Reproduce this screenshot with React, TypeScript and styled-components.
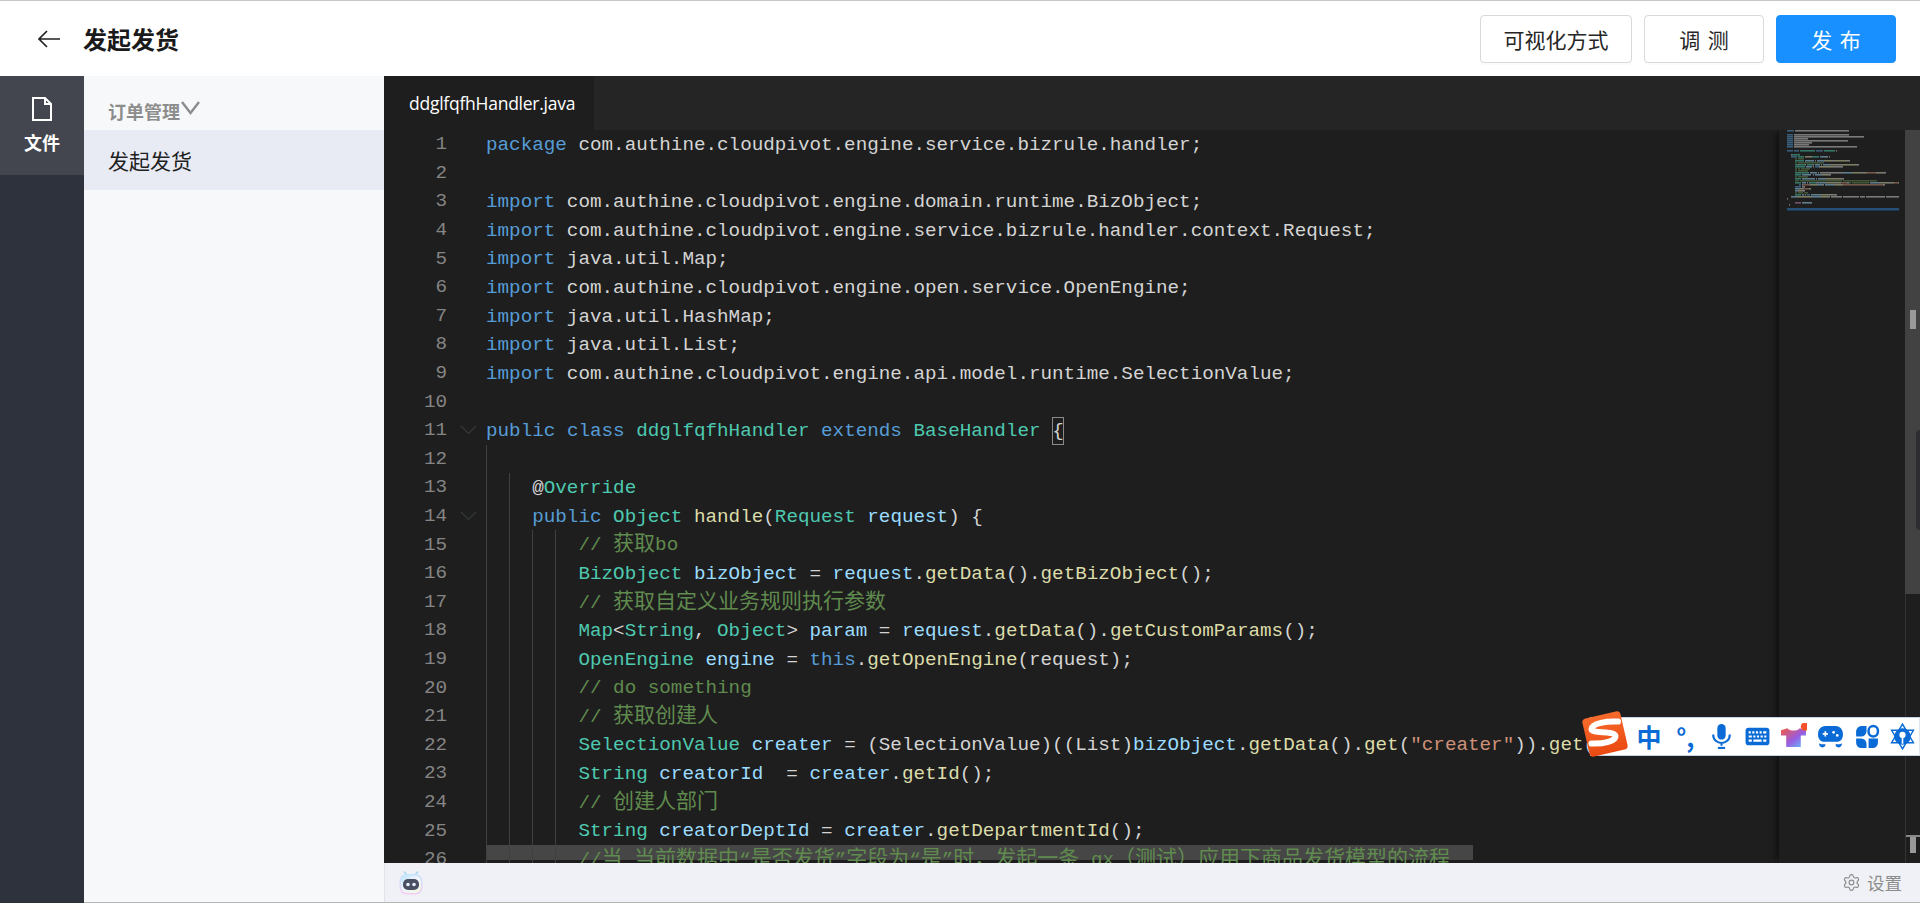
import React from 'react';
import styled, { createGlobalStyle } from 'styled-components';
import { Settings } from 'lucide-react';

const GlobalStyle = createGlobalStyle`
  html, body {
    margin: 0;
    padding: 0;
    height: 100%;
    overflow: hidden;
    background: #fff;
    font-family: "Noto Sans CJK SC", "Liberation Sans", sans-serif;
  }
  * { box-sizing: border-box; }
`;

const Page = styled.div`
  position: relative;
  display: flex;
  flex-direction: column;
  height: 903px;
  width: 1920px;
  border-top: 1px solid #c6c6c6;
  overflow: hidden;
`;

const Header = styled.header`
  flex: 0 0 75px;
  display: flex;
  align-items: center;
  padding: 0 24px 0 37px;
  background: #fff;
`;

const BackIcon = styled.svg`
  width: 23px;
  height: 20px;
  margin-right: 23px;
  flex: none;
`;

const Title = styled.h1`
  margin: 0;
  font-size: 24px;
  font-weight: 700;
  color: #1a1a1a;
  flex: 1;
`;

const Actions = styled.div`
  display: flex;
  gap: 12px;
`;

const ActionButton = styled.button<{ $primary?: boolean; $width: number }>`
  width: ${(p) => p.$width}px;
  height: 48px;
  border-radius: 4px;
  border: 1px solid ${(p) => (p.$primary ? '#1890ff' : '#d9d9d9')};
  background: ${(p) => (p.$primary ? '#1890ff' : '#fff')};
  color: ${(p) => (p.$primary ? '#fff' : '#262626')};
  font-family: inherit;
  font-size: 21px;
  word-spacing: 3px;
  box-shadow: 0 2px 0 rgba(0, 0, 0, 0.015);
  padding: 0;
`;

const Main = styled.div`
  flex: 1;
  min-height: 0;
  display: flex;
`;

const Rail = styled.nav`
  flex: 0 0 84px;
  background: #2d323c;
`;

const RailItem = styled.div`
  height: 99px;
  background: #43464f;
  display: flex;
  flex-direction: column;
  align-items: center;
  padding-top: 21px;
  color: #fff;
  font-size: 18px;
  font-weight: 700;
  line-height: 26px;
`;

const FileIcon = styled.svg`
  width: 20px;
  height: 24px;
  margin-bottom: 8px;
`;

const Sidebar = styled.aside`
  flex: 0 0 300px;
  background: #f7f8fa;
  border-bottom: 1px solid #b5b5b5;
`;

const GroupTitle = styled.div`
  height: 54px;
  display: flex;
  align-items: center;
  padding: 16px 0 0 24px;
  font-size: 18px;
  font-weight: 700;
  color: #8c8c8c;
`;

const GroupChevron = styled.svg`
  width: 19px;
  height: 14px;
  margin: -7px 0 0 1px;
`;

const TreeItem = styled.div`
  height: 60px;
  display: flex;
  align-items: center;
  padding-left: 24px;
  background: #e8ebf3;
  font-size: 21px;
  color: #1f1f1f;
`;

const Workspace = styled.section`
  flex: 1;
  min-width: 0;
  display: flex;
  flex-direction: column;
  border-bottom: 1px solid #b5b5b5;
`;

const TabBar = styled.div`
  flex: 0 0 54px;
  display: flex;
  background: #252526;
`;

const Tab = styled.div`
  width: 210px;
  display: flex;
  align-items: center;
  padding-left: 25px;
  background: #1e1e1e;
  color: #fff;
  font-family: "Open Sans", sans-serif;
  font-size: 17.5px;
  letter-spacing: -0.25px;
`;

const Editor = styled.div`
  flex: 1;
  min-height: 0;
  display: flex;
  background: #1e1e1e;
  overflow: hidden;
`;

const CodePane = styled.div`
  flex: 1;
  min-width: 0;
  overflow: hidden;
`;

const CodeRow = styled.div`
  display: flex;
  height: 28.6px;
  line-height: 30px;
  font-family: "Liberation Mono", "Noto Sans CJK SC", monospace;
  font-size: 19.25px;
`;

const Gutter = styled.div`
  flex: 0 0 102px;
  display: flex;
  align-items: center;
  justify-content: flex-end;
  color: #858585;
  padding-right: 9px;
`;

const LineNo = styled.span`
  width: 54px;
  text-align: right;
  margin-right: 13px;
`;

const FoldSlot = styled.span`
  width: 17px;
  height: 10px;
  display: flex;
`;

const CodeText = styled.div`
  position: relative;
  flex: 1;
  white-space: pre;
  color: #d4d4d4;
`;

const Guide = styled.i<{ $level: number }>`
  position: absolute;
  top: 0;
  bottom: 0;
  left: ${(p) => p.$level * 23.1}px;
  width: 1px;
  background: #404040;
`;

const Selection = styled.i`
  position: absolute;
  top: 0;
  left: 0;
  width: 987px;
  height: 15px;
  background: #464646;
`;

const TOKEN_COLORS: Record<string, string> = {
  t: '#d4d4d4',
  k: '#569cd6',
  c: '#4ec9b0',
  v: '#9cdcfe',
  f: '#dcdcaa',
  m: '#608b4e',
  s: '#ce9178',
  p: '#c586c0',
};

const Token = styled.span<{ $kind: string }>`
  position: relative;
  color: ${(p) => TOKEN_COLORS[p.$kind]};
`;

const Cjk = styled.span`
  font-family: "Noto Sans CJK SC", sans-serif;
  font-size: 21px;
  line-height: 0;
`;

const Bracket = styled.span`
  position: relative;
  display: inline-block;
  height: 28px;
  line-height: 28px;
  box-shadow: inset 0 0 0 1px #8a8a8a;
`;

const Minimap = styled.div`
  flex: 0 0 126px;
  padding-left: 8px;
  background: #1e1e1e;
  box-shadow: -5px 0 6px -3px #0d0d0d;
  position: relative;
`;

const MinimapSvg = styled.svg`
  display: block;
  width: 118px;
  height: 120px;
  filter: blur(0.35px);
`;

const Overview = styled.div`
  flex: 0 0 15px;
  position: relative;
  border-left: 1px solid #333;
`;

const Slider = styled.div`
  position: absolute;
  top: 0;
  left: -1px;
  right: 0;
  height: 464px;
  background: #424242;
`;

const SliderMark = styled.div`
  position: absolute;
  top: 180px;
  left: 5px;
  width: 6px;
  height: 19px;
  background: #999;
`;

const SliderHandle = styled.div`
  position: absolute;
  top: 300px;
  right: 0;
  width: 4px;
  height: 100px;
  border-radius: 4px 0 0 4px;
  background: #2c2c31;
`;

const RulerTee = styled.div`
  position: absolute;
  top: 705px;
  left: 0;
  right: 0;
  height: 2px;
  background: #888;
  &::after {
    content: '';
    position: absolute;
    top: 2px;
    left: 4px;
    width: 6px;
    height: 16px;
    background: #999;
  }
`;

const StatusBar = styled.footer`
  flex: 0 0 39px;
  display: flex;
  align-items: center;
  justify-content: space-between;
  padding: 0 18px 0 14px;
  background: #f0f1f6;
  border-left: 1px solid #e3e4e9;
`;

const RobotIcon = styled.svg`
  width: 24px;
  height: 24px;
`;

const SettingsLink = styled.div`
  display: flex;
  align-items: center;
  gap: 6px;
  font-size: 17.5px;
  color: #8c8c8c;
`;

const ImeBar = styled.div`
  position: absolute;
  top: 716px;
  right: 0;
  width: 330px;
  height: 39px;
  padding-left: 40px;
  display: flex;
  align-items: center;
  background: #fff;
  border: 1px solid #c5d3e6;
  border-right-color: #dfe6f0;
`;

const ImeLogo = styled.svg`
  position: absolute;
  left: -12px;
  top: -10px;
  width: 52px;
  height: 52px;
`;

const ImeCell = styled.span`
  flex: 0 0 36.2px;
  display: flex;
  align-items: center;
  justify-content: center;
  color: #0a6bd6;
  font-weight: 700;
  font-size: 25px;
  line-height: 1;
`;

const ImeIcon = styled.svg`
  width: 27px;
  height: 27px;
`;

// [x:text] marks a token, everything else is plain text
const CODE: { n: number; level: number; src: string; fold?: boolean; selected?: boolean }[] = [
  { n: 1, level: 0, src: '[k:package] com.authine.cloudpivot.engine.service.bizrule.handler;' },
  { n: 2, level: 0, src: '' },
  { n: 3, level: 0, src: '[k:import] com.authine.cloudpivot.engine.domain.runtime.BizObject;' },
  { n: 4, level: 0, src: '[k:import] com.authine.cloudpivot.engine.service.bizrule.handler.context.Request;' },
  { n: 5, level: 0, src: '[k:import] java.util.Map;' },
  { n: 6, level: 0, src: '[k:import] com.authine.cloudpivot.engine.open.service.OpenEngine;' },
  { n: 7, level: 0, src: '[k:import] java.util.HashMap;' },
  { n: 8, level: 0, src: '[k:import] java.util.List;' },
  { n: 9, level: 0, src: '[k:import] com.authine.cloudpivot.engine.api.model.runtime.SelectionValue;' },
  { n: 10, level: 0, src: '' },
  { n: 11, level: 0, fold: true, src: '[k:public] [k:class] [c:ddglfqfhHandler] [k:extends] [c:BaseHandler] [b:{]' },
  { n: 12, level: 1, src: '' },
  { n: 13, level: 2, src: '    @[c:Override]' },
  { n: 14, level: 2, fold: true, src: '    [k:public] [c:Object] [f:handle]([c:Request] [v:request]) {' },
  { n: 15, level: 4, src: '        [m:// 获取bo]' },
  { n: 16, level: 4, src: '        [c:BizObject] [v:bizObject] = [v:request].[f:getData]().[f:getBizObject]();' },
  { n: 17, level: 4, src: '        [m:// 获取自定义业务规则执行参数]' },
  { n: 18, level: 4, src: '        [c:Map]<[c:String], [c:Object]> [v:param] = [v:request].[f:getData]().[f:getCustomParams]();' },
  { n: 19, level: 4, src: '        [c:OpenEngine] [v:engine] = [k:this].[f:getOpenEngine](request);' },
  { n: 20, level: 4, src: '        [m:// do something]' },
  { n: 21, level: 4, src: '        [m:// 获取创建人]' },
  { n: 22, level: 4, src: '        [c:SelectionValue] [v:creater] = (SelectionValue)((List)[v:bizObject].[f:getData]().[f:get]([s:"creater"])).[f:get](0);' },
  { n: 23, level: 4, src: '        [c:String] [v:creatorId]  = [v:creater].[f:getId]();' },
  { n: 24, level: 4, src: '        [m:// 创建人部门]' },
  { n: 25, level: 4, src: '        [c:String] [v:creatorDeptId] = [v:creater].[f:getDepartmentId]();' },
  { n: 26, level: 4, selected: true, src: '        [m://当 当前数据中“是否发货”字段为“是”时，发起一条 gx（测试）应用下商品发货模型的流程]' },
];

// rest of the file, only visible as tiny rows in the minimap
const MINIMAP_TAIL = [
  '        [c:String] [v:sfhf] = ([c:String])[v:bizObject].[f:getData]().[f:get]([s:"sfhf"]);[m:// xxxxxxxxxxxxxxxxx] [v:bizObject].[f:getData]().[f:get]([s:"xx"]);',
  '            [k:if] ([s:"xxxxx"].[f:equals]([v:sfhf])) [v:bizObject].[f:setData]([s:"xxxxxxxxxxxxxxxxxxxxxxxxxxxxxxxxxxxxxx"]);',
  '        [k:return] ();',
  '        [v:data].[f:put]([s:"xxx"]);',
  '        [v:map].[f:put]();',
  '        [m:// start flow]',
  '        [c:String] [v:id] = [k:new] [v:bizObject].[f:getData]().[f:get]();',
  '    [v:engine].[f:startWorkflow]([v:bizObject].[f:getId](), xxxxxxxxxx, xxxxxxxxxxxxxxx, true, xxxxxxxxxxxxxxxxxx, xxxxxxxxxxx);',
  '}',
  '',
  '        [p:return] [v:bizObject];',
  '  }',
];

type Tok = { kind: string; text: string };

function parseTokens(src: string): Tok[] {
  const parts = src.split(/\[(\w):([^\]]*)\]/);
  const out: Tok[] = [];
  for (let i = 0; i < parts.length; i += 3) {
    if (parts[i]) out.push({ kind: 't', text: parts[i] });
    if (parts[i + 1]) out.push({ kind: parts[i + 1], text: parts[i + 2] });
  }
  return out;
}

function renderText(text: string) {
  return text
    .split(/([\u4e00-\u9fff\uff00-\uffef]+)/)
    .map((part, i) => (i % 2 ? <Cjk key={i}>{part}</Cjk> : part));
}

function CodeLine({ n, level, src, fold, selected }: (typeof CODE)[number]) {
  return (
    <CodeRow>
      <Gutter>
        <LineNo>{n}</LineNo>
        <FoldSlot>
          {fold && (
            <svg width="17" height="10" viewBox="0 0 17 10" fill="none" stroke="#343a35" strokeWidth="1.2">
              <path d="M1 1l7.5 7.5L16 1" />
            </svg>
          )}
        </FoldSlot>
      </Gutter>
      <CodeText>
        {selected && <Selection />}
        {Array.from({ length: level }, (_, i) => (
          <Guide key={i} $level={i} />
        ))}
        {parseTokens(src).map((tok, i) =>
          tok.kind === 'b' ? (
            <Bracket key={i}>{tok.text}</Bracket>
          ) : (
            <Token key={i} $kind={tok.kind}>
              {renderText(tok.text)}
            </Token>
          ),
        )}
      </CodeText>
    </CodeRow>
  );
}

function MinimapRows() {
  const rows = [...CODE.map((l) => l.src), ...MINIMAP_TAIL];
  const rects: React.ReactNode[] = [];
  rows.forEach((src, row) => {
    let x = 0;
    parseTokens(src).forEach((tok) => {
      const kind = tok.kind === 'b' ? 't' : tok.kind;
      for (const word of tok.text.split(/(\s+)/)) {
        const w = [...word].reduce((s, c) => s + (c.charCodeAt(0) > 0x2fff ? 2 : 1), 0);
        if (word.trim() && x < 112) {
          rects.push(
            <rect
              key={`${row}-${x}`}
              x={x}
              y={row * 2}
              width={Math.min(w, 112 - x)}
              height={1.6}
              fill={TOKEN_COLORS[kind]}
              opacity={0.5}
            />,
          );
        }
        x += w;
      }
    });
  });
  return (
    <MinimapSvg viewBox="0 0 118 120">
      {rects}
      <rect x="0" y="78" width="112" height="2.5" fill="#264f78" />
    </MinimapSvg>
  );
}

export default function App() {
  return (
    <>
      <GlobalStyle />
      <Page>
        <Header>
          <BackIcon viewBox="0 0 23 20" fill="none" stroke="#222" strokeWidth="1.7">
            <path d="M23 10H2M10 2l-8 8 8 8" />
          </BackIcon>
          <Title>发起发货</Title>
          <Actions>
            <ActionButton $width={152}>可视化方式</ActionButton>
            <ActionButton $width={120}>调 测</ActionButton>
            <ActionButton $width={120} $primary>
              发 布
            </ActionButton>
          </Actions>
        </Header>
        <Main>
          <Rail>
            <RailItem>
              <FileIcon viewBox="0 0 20 24" fill="none" stroke="#fff" strokeWidth="2">
                <path d="M1 1h12l6 6v16H1zM13 1v6h6" />
              </FileIcon>
              文件
            </RailItem>
          </Rail>
          <Sidebar>
            <GroupTitle>
              订单管理
              <GroupChevron viewBox="0 0 19 14" fill="none" stroke="#8c8c8c" strokeWidth="2.4">
                <path d="M1 1l8.500 11L18 1" />
              </GroupChevron>
            </GroupTitle>
            <TreeItem>发起发货</TreeItem>
          </Sidebar>
          <Workspace>
            <TabBar>
              <Tab>ddglfqfhHandler.java</Tab>
            </TabBar>
            <Editor>
              <CodePane>
                {CODE.map((line) => (
                  <CodeLine key={line.n} {...line} />
                ))}
              </CodePane>
              <Minimap>
                <MinimapRows />
              </Minimap>
              <Overview>
                <Slider>
                  <SliderMark />
                  <SliderHandle />
                </Slider>
                <RulerTee />
              </Overview>
            </Editor>
            <StatusBar>
              <RobotIcon viewBox="0 0 24 24">
                <defs>
                  <linearGradient id="robotGlow" x1="0" y1="0" x2="1" y2="1">
                    <stop offset="0" stopColor="#bfe6fa" />
                    <stop offset="0.5" stopColor="#f2f4fc" />
                    <stop offset="1" stopColor="#eef9df" />
                  </linearGradient>
                  <linearGradient id="robotEdge" x1="0" y1="0" x2="0" y2="1">
                    <stop offset="0" stopColor="#c4e6fa" />
                    <stop offset="1" stopColor="#f6cdf3" />
                  </linearGradient>
                </defs>
                <path d="M5 0.500l3 3.500M19 0.500l-3 3.500" stroke="#a5d8f5" strokeWidth="1.500" fill="none" />
                <rect x="0.500" y="3" width="23" height="20.500" rx="7" fill="url(#robotEdge)" />
                <rect x="2" y="4.500" width="20" height="17.500" rx="6" fill="url(#robotGlow)" />
                <rect x="4" y="8" width="16" height="11" rx="5" fill="#4b4e60" />
                <circle cx="9" cy="13.500" r="1.800" fill="#e8f1ff" />
                <circle cx="15" cy="13.500" r="1.800" fill="#e8f1ff" />
              </RobotIcon>
              <SettingsLink>
                <Settings size={19} strokeWidth={1.5} />
                设置
              </SettingsLink>
            </StatusBar>
          </Workspace>
        </Main>
        <ImeBar>
          <ImeLogo viewBox="0 0 52 52">
            <defs>
              <linearGradient id="imeOrange" x1="0" y1="0" x2="0" y2="1">
                <stop offset="0" stopColor="#f76a2c" />
                <stop offset="1" stopColor="#ea4a12" />
              </linearGradient>
            </defs>
            <rect x="6.500" y="6.500" width="39" height="39" rx="4" fill="url(#imeOrange)" transform="rotate(-13 26 26)" />
            <path
              d="M39 13.500C28 13 13 15 12.500 21c-.4 5 23 1.500 24 7 .8 5-12 8-24 7.500"
              fill="none"
              stroke="#fff"
              strokeWidth="6"
              strokeLinecap="round"
            />
          </ImeLogo>
          <ImeCell>中</ImeCell>
          <ImeCell>°,</ImeCell>
          <ImeCell>
            <ImeIcon viewBox="0 0 26 26">
              <rect x="9" y="1" width="8" height="15" rx="4" fill="#0a6bd6" />
              <path d="M5 11c0 11 16 11 16 0M13 20v2" fill="none" stroke="#0a6bd6" strokeWidth="2" />
              <path d="M9.500 24h7" stroke="#0a6bd6" strokeWidth="2" />
            </ImeIcon>
          </ImeCell>
          <ImeCell>
            <ImeIcon viewBox="0 0 26 26">
              <rect x="1.500" y="4.500" width="23" height="17" rx="3" fill="#0a6bd6" />
              <path
                d="M4.500 8h2v2h-2zM8 8h2v2H8zM11.500 8h2v2h-2zM15 8h2v2h-2zM18.500 8h3v2h-3zM4.500 12h3v2h-3zM9 12h2v2H9zM12.500 12h2v2h-2zM16 12h2v2h-2zM19.500 12h2v2h-2zM4.500 16h3v2h-3zM9 16h8v2H9zM18.500 16h3v2h-3z"
                fill="#fff"
              />
            </ImeIcon>
          </ImeCell>
          <ImeCell>
            <ImeIcon viewBox="0 0 26 26">
              <defs>
                <linearGradient id="imeShirt" x1="0" y1="0" x2="1" y2="1">
                  <stop offset="0" stopColor="#f55a3c" />
                  <stop offset="0.55" stopColor="#9a5ce0" />
                  <stop offset="1" stopColor="#5cc6ff" />
                </linearGradient>
              </defs>
              <path d="M7 5L1 7v5h5v11h14V12h5V7l-6-2c-2 3-10 3-12 0z" fill="url(#imeShirt)" />
              <circle cx="24" cy="3.500" r="4" fill="#f4502a" />
            </ImeIcon>
          </ImeCell>
          <ImeCell>
            <ImeIcon viewBox="0 0 26 26">
              <path
                d="M8 3h10c4.500 0 7 3.500 7 8s-2.500 7-6 7H7c-3.500 0-6-2.500-6-7s2.500-8 7-8zM2 19.500c0 2.500 1.200 4 3.200 4s3-1.500 3-3H5c-1.200 0-2-.3-3-1zM24 19.500c0 2.500-1.200 4-3.200 4s-3-1.500-3-3H21c1.200 0 2-.3 3-1z"
                fill="#0a6bd6"
              />
              <path d="M8 8v5M5.500 10.500h5" stroke="#fff" strokeWidth="1.600" />
              <circle cx="16" cy="9" r="1.300" fill="#fff" />
              <circle cx="19.500" cy="12" r="1.300" fill="#fff" />
            </ImeIcon>
          </ImeCell>
          <ImeCell>
            <ImeIcon viewBox="0 0 26 26">
              <path d="M8 3h5v5a5 5 0 0 1-5 5H3V8a5 5 0 0 1 5-5z" fill="#0a6bd6" />
              <rect x="15" y="3" width="9" height="10" rx="4.500" fill="none" stroke="#0a6bd6" strokeWidth="2.400" />
              <path d="M3 15h5a5 5 0 0 1 5 5v4H8a5 5 0 0 1-5-5z" fill="#0a6bd6" />
              <path d="M15 15h9v4a5 5 0 0 1-5 5h-4z" fill="#0a6bd6" />
            </ImeIcon>
          </ImeCell>
          <ImeCell>
            <ImeIcon viewBox="0 0 26 26">
              <path d="M13 1l10.500 18h-21z" fill="none" stroke="#0a6bd6" strokeWidth="1.400" />
              <path d="M13 25L2.500 7h21z" fill="none" stroke="#0a6bd6" strokeWidth="1.400" />
              <circle cx="13" cy="13" r="8" fill="#0a6bd6" />
              <circle cx="13" cy="11.500" r="3" fill="#fff" />
              <path d="M13 13v7" stroke="#fff" strokeWidth="1.600" />
            </ImeIcon>
          </ImeCell>
        </ImeBar>
      </Page>
    </>
  );
}
